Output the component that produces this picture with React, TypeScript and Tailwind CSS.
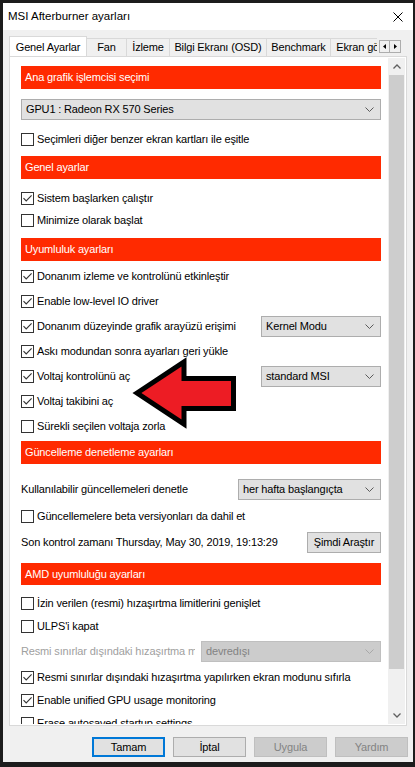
import React from "react";

const compat = [
  { label: "Donanım izleme ve kontrolünü etkinleştir", checked: true },
  { label: "Enable low-level IO driver", checked: true },
  { label: "Donanım düzeyinde grafik arayüzü erişimi", checked: true, select: "Kernel Modu" },
  { label: "Askı modundan sonra ayarları geri yükle", checked: true },
  { label: "Voltaj kontrolünü aç", checked: true, select: "standard MSI" },
  { label: "Voltaj takibini aç", checked: true },
  { label: "Sürekli seçilen voltaja zorla", checked: false },
];

const tabs = [
  { label: "Fan", w: "w-[40px]" },
  { label: "İzleme", w: "w-[43px]" },
  { label: "Bilgi Ekranı (OSD)", w: "w-[97px]" },
  { label: "Benchmark", w: "w-[64px]" },
  { label: "Ekran görüntüsü", w: "w-[90px]" },
];

const Checkbox = ({ checked = false }: { checked?: boolean }) => (
  <span className="flex h-[13px] w-[13px] shrink-0 items-center justify-center border border-[#333333] bg-white">
    {checked && (
      <svg width="11" height="11" viewBox="0 0 11 11">
        <path d="M1.5 5.2 4.2 8 9.6 2.4" fill="none" stroke="#333333" strokeWidth="1.1" />
      </svg>
    )}
  </span>
);

const Chevron = ({ color = "#5a5a5a" }: { color?: string }) => (
  <svg width="9" height="5" viewBox="0 0 9 5">
    <path d="M0.5 0.5 4.5 4.5 8.5 0.5" fill="none" stroke={color} />
  </svg>
);

const Select = ({ value, className = "", disabled = false }: { value: string; className?: string; disabled?: boolean }) => (
  <div
    className={`flex h-[21px] items-center border pl-[4px] pr-[6px] ${
      disabled ? "border-[#bfbfbf] bg-[#cccccc] text-[#838383]" : "border-[#adadad] bg-[#e1e1e1]"
    } ${className}`}
  >
    <span className="flex-1 whitespace-nowrap">{value}</span>
    <Chevron color={disabled ? "#a8a8a8" : "#5a5a5a"} />
  </div>
);

const Section = ({ title, className = "" }: { title: string; className?: string }) => (
  <div className={`flex h-[23px] items-center bg-[#ff2a00] pl-[4px] text-white ${className}`}>{title}</div>
);

const CheckRow = ({
  label,
  checked = false,
  className = "",
  children,
}: {
  label: string;
  checked?: boolean;
  className?: string;
  children?: React.ReactNode;
}) => (
  <div className={`flex items-center ${className}`}>
    <Checkbox checked={checked} />
    <span className="ml-[3px] whitespace-nowrap">{label}</span>
    {children}
  </div>
);

export default function App() {
  return (
    <div className="relative h-[767px] w-[415px] overflow-hidden bg-[#1c1c1c] pl-[3px] pt-[3px] font-['Liberation_Sans',Arial,sans-serif] text-[11px] tracking-[-0.15px] text-black">
      <div className="flex h-[759px] w-[410px] flex-col bg-[#f0f0f0]">
        {/* title bar */}
        <div className="flex h-[27px] items-center justify-between bg-white pl-[5px] pr-[10px]">
          <span className="text-[11.5px] tracking-normal">MSI Afterburner ayarları</span>
          <svg width="10" height="10" viewBox="0 0 10 10">
            <path d="M0.5 0.5 9.5 9.5 M9.5 0.5 0.5 9.5" stroke="#000" strokeWidth="1" />
          </svg>
        </div>

        {/* tabs */}
        <div className="mt-[6px] flex h-[20px] items-end pl-[6px]">
          <div className="flex w-[368px] items-end overflow-hidden">
            <div className="relative z-10 -mb-px flex h-[21px] w-[78px] shrink-0 items-center justify-center border border-b-0 border-[#d9d9d9] bg-white">
              Genel Ayarlar
            </div>
            {tabs.map((t) => (
              <div
                key={t.label}
                className={`flex h-[18px] shrink-0 items-center justify-center border border-b-0 border-l-0 border-[#d9d9d9] ${t.w}`}
              >
                <span className="whitespace-nowrap">{t.label}</span>
              </div>
            ))}
          </div>
          <div className="mb-[3px] ml-[2px] flex">
            <div className="flex h-[13px] w-[11px] items-center justify-center border border-[#adadad] bg-[#f0f0f0]">
              <svg width="3" height="5" viewBox="0 0 3 5">
                <path d="M3 0 0 2.5 3 5Z" fill="#000" />
              </svg>
            </div>
            <div className="flex h-[13px] w-[11px] items-center justify-center border border-l-0 border-[#adadad] bg-[#f0f0f0]">
              <svg width="3" height="5" viewBox="0 0 3 5">
                <path d="M0 0 3 2.5 0 5Z" fill="#000" />
              </svg>
            </div>
          </div>
        </div>

        {/* panel */}
        <div className="ml-[6px] h-[670px] w-[398px] border border-[#d9d9d9] bg-white pb-px pr-px pt-px">
          <div className="flex h-[666px]">
            <div className="flex-1 overflow-hidden pl-[11px] pr-[7px] pt-[8px]">
              <Section title="Ana grafik işlemcisi seçimi" />
              <Select value="GPU1 : Radeon RX 570 Series" className="mt-[10px]" />
              <CheckRow label="Seçimleri diğer benzer ekran kartları ile eşitle" className="mt-[9px] h-[20px]" />

              <Section title="Genel ayarlar" className="mt-[7px]" />
              <CheckRow label="Sistem başlarken çalıştır" checked className="mt-[8px] h-[22px]" />
              <CheckRow label="Minimize olarak başlat" className="h-[22px]" />

              <Section title="Uyumluluk ayarları" className="mt-[7px]" />
              <div className="mt-[3px]">
                {compat.map((c) => (
                  <CheckRow key={c.label} label={c.label} checked={c.checked} className="h-[25px]">
                    {c.select && <Select value={c.select} className="ml-auto w-[120px]" />}
                  </CheckRow>
                ))}
              </div>

              <Section title="Güncelleme denetleme ayarları" className="mt-[2px]" />
              <div className="mt-[15px] flex h-[21px] items-center">
                <span>Kullanılabilir güncellemeleri denetle</span>
                <Select value="her hafta başlangıçta" className="ml-auto w-[143px]" />
              </div>
              <CheckRow label="Güncellemelere beta versiyonları da dahil et" className="mt-[5px] h-[22px]" />
              <div className="mt-[5px] flex h-[21px] items-center">
                <span>Son kontrol zamanı Thursday, May 30, 2019, 19:13:29</span>
                <button className="ml-auto flex h-[21px] w-[74px] items-center justify-center border border-[#adadad] bg-[#e1e1e1]">
                  Şimdi Araştır
                </button>
              </div>

              <Section title="AMD uyumluluğu ayarları" className="mt-[10px] !h-[22px]" />
              <CheckRow label="İzin verilen (resmi) hızaşırtma limitlerini genişlet" className="mt-[7px] h-[22px]" />
              <CheckRow label="ULPS'i kapat" className="h-[24px]" />
              <div className="flex h-[27px] items-center">
                <span className="w-[174px] overflow-hidden whitespace-nowrap text-[#a0a0a0]">
                  Resmi sınırlar dışındaki hızaşırtma modu
                </span>
                <Select value="devredışı" disabled className="ml-auto w-[180px]" />
              </div>
              <CheckRow
                label="Resmi sınırlar dışındaki hızaşırtma yapılırken ekran modunu sıfırla"
                checked
                className="h-[24px]"
              />
              <CheckRow label="Enable unified GPU usage monitoring" checked className="h-[22px]" />
              <CheckRow label="Erase autosaved startup settings" className="h-[24px]" />
            </div>

            {/* scrollbar */}
            <div className="flex w-[17px] flex-col bg-[#f0f0f0]">
              <div className="flex h-[17px] items-center justify-center">
                <svg width="8" height="5" viewBox="0 0 8 5">
                  <path d="M0.5 4.5 4 1 7.5 4.5" fill="none" stroke="#606060" strokeWidth="1.3" />
                </svg>
              </div>
              <div className="mx-px h-[594px] bg-[#cdcdcd]" />
              <div className="flex-1" />
              <div className="flex h-[17px] items-center justify-center">
                <svg width="8" height="5" viewBox="0 0 8 5">
                  <path d="M0.5 0.5 4 4 7.5 0.5" fill="none" stroke="#606060" strokeWidth="1.3" />
                </svg>
              </div>
            </div>
          </div>
        </div>

        {/* dialog buttons */}
        <div className="mt-[11px] flex justify-end gap-[8px] pr-[5px]">
          <button className="flex h-[20px] w-[73px] items-center justify-center border-2 border-[#0078d7] bg-[#e1e1e1]">
            Tamam
          </button>
          <button className="flex h-[20px] w-[73px] items-center justify-center border border-[#adadad] bg-[#e1e1e1]">
            İptal
          </button>
          <button className="flex h-[20px] w-[73px] items-center justify-center border border-[#bfbfbf] bg-[#cccccc] text-[#838383]">
            Uygula
          </button>
          <button className="flex h-[20px] w-[73px] items-center justify-center border border-[#bfbfbf] bg-[#cccccc] text-[#838383]">
            Yardım
          </button>
        </div>
      </div>

      {/* red annotation arrow */}
      <svg className="pointer-events-none absolute left-0 top-0" width="415" height="767" viewBox="0 0 415 767">
        <polygon
          points="137,393 184,362 184,378.5 233.5,378.5 233.5,408.5 184,408.5 184,424"
          fill="#ed1c24"
          stroke="#000"
          strokeWidth="5"
          strokeLinejoin="miter"
        />
      </svg>
    </div>
  );
}
